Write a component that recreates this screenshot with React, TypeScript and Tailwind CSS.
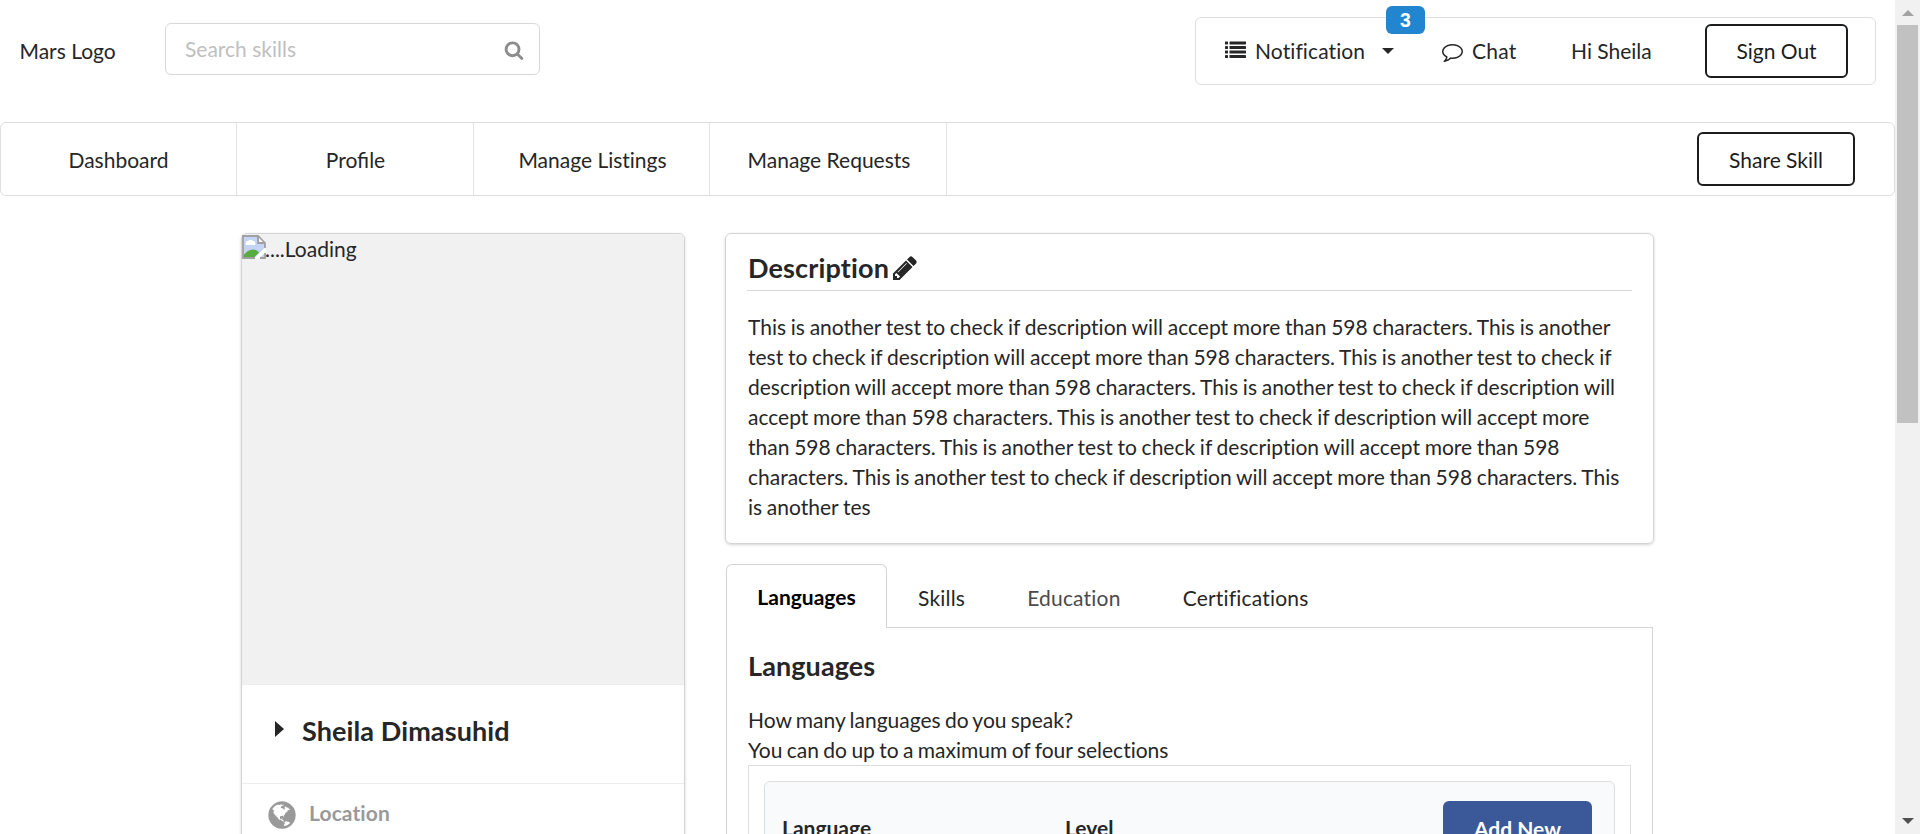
import type { ReactNode } from "react";

const GLOBE =
  "M896 128q209 0 385.5 103t279.5 279.5 103 385.5-103 385.5-279.5 279.5-385.5 103-385.5-103-279.5-279.5-103-385.5 103-385.5 279.5-279.5 385.5-103zm274 521q-2 1-9.5 9.5t-13.5 9.5q2 0 4.5-5t5-11 3.5-7q6-7 22-15 14-6 52-12 34-8 51 11-2-2 9.5-13t14.5-12q3-2 15-4.5t15-7.5l2-22q-12 1-17.5-7t-6.5-21q0 2-6 8 0-7-4.5-8t-11.5 1-9 1q-10-3-15-7.5t-8-16.5-4-15q-2-5-9.5-11t-9.5-10q-1-2-2.5-5.5t-3-6.5-4-5.5-5.5-2.5-7 5-7.5 10-4.5 5q-3-2-6-1.5t-4.5 1-4.5 3-5 3.5q-3 2-8.5 3t-8.5 2q15-5-1-11-10-4-16-3 9-4 7.5-12t-8.5-14h5q-1-4-8.5-8.5t-17.5-8.5-13-6q-8-5-34-9.5t-33-.5q-5 6-4.5 10.5t4 14 3.5 12.5q1 6-5.5 13t-6.5 12q0 7 14 15.5t10 21.5q-3 8-16 16t-16 12q-5 8-1.5 18.5t10.5 16.5q2 2 1.5 4t-3.5 4.5-5.5 4-6.5 3.5l-3 2q-11 5-20.5-6t-13.5-26q-7-25-16-30-23-8-29 1-5-13-41-26-25-9-58-4 6-1 0-15-7-15-19-12 3-6 4-17.5t1-13.5q3-13 12-23 1-1 7-8.5t9.5-13.5.5-6q35 4 50-11 5-5 11.5-17t10.5-17q9-6 14-5.5t14.5 5.5 14.5 5q14 1 15.5-11t-7.5-20q12 1 3-17-4-7-8-9-12-4-27 5-8 4 2 8-1-1-9.5 10.5t-16.5 17.5-16-5q-1-1-5.5-13.5t-9.5-13.5q-8 0-16 15 3-8-11-15t-24-8q19-12-8-27-7-4-20.5-5t-19.5 4q-5 7-5.5 11.5t5 8 10.5 5.5 11.5 4 8.5 3q14 10 8 14-2 1-8.5 3.5t-11.5 4.5-6 4q-3 4 0 14t-2 14q-5-5-9-17.5t-7-16.5q7 9-25 6l-10-1q-4 0-16 2t-20.5 1-13.5-8q-4-8 0-20 1-4 4-2-4-3-11-9.5t-10-8.5q-46 15-94 41 6 1 12-1 5-2 13-6.5t10-5.5q34-14 42-7l5-5q14 16 20 25-7-4-30-1-20 6-22 12 7 12 5 18-4-3-11.5-10t-14.5-11-15-5q-16 0-22 1-146 80-235 222 7 7 12 8 4 1 5 9t2.5 11 11.5-3q9 8 3 19 1-1 44 27 19 17 21 21 3 11-10 18-1-2-9-9t-9-4q-3 5 .5 18.5t10.5 12.5q-7 0-9.5 16t-2.5 35.5-1 23.5l2 1q-3 12 5.5 34.5t21.5 19.5q-13 3 20 43 6 8 8 9 3 2 12 7.5t15 10 10 10.5q4 5 10 22.5t14 23.5q-2 6 9.5 20t10.5 23q-1 0-2.5 1t-2.5 1q3 7 15.5 14t15.5 13q1 3 2 10t3 11 8 2q2-20-24-62-15-25-17-29-3-5-5.5-15.5t-4.5-14.5q2 0 6 1.5t8.5 3.5 7.5 4 2 3q-3 7 2 17.5t12 18.5 17 19 12 13q6 6 14 19.5t0 13.5q9 0 20 10t17 20q5 8 8 26t5 24q2 7 8.5 13.5t12.5 9.5l16 8 13 7q5 2 18.5 10.5t21.5 11.5q10 4 16 4t14.5-2.5 13.5-3.5q15-2 29 15t21 21q36 19 55 11-2 1 .5 7.5t8 15.5 9 14.5 5.5 8.5q5 6 18 15t18 15q6-4 7-9-3 8 7 20t18 10q14-3 14-32-31 15-49-18 0-1-2.5-5.5t-4-8.5-2.5-8.5 0-7.5 5-3q9 0 10-3.5t-2-12.5-4-13q-1-8-11-20t-12-15q-5 9-16 8t-16-9q0 1-1.5 5.5t-1.5 6.5q-13 0-15-1 1-3 2.5-17.5t3.5-22.5q1-4 5.5-12t7.5-14.5 4-12.5-4.5-9.5-17.5-2.5q-19 1-26 20-1 3-3 10.5t-5 11.5-9 7q-7 3-24 2t-24-5q-13-8-22.5-29t-9.5-37q0-10 2.5-26.5t3-25-5.5-24.5q3-2 9-9.5t10-10.5q2-1 4.5-1.5t4.5 0 4-1.5 3-6q-1-1-4-3-3-3-4-3 7 3 28.5-1.5t27.5 1.5q15 11 22-2 0-1-2.5-9.5t-.5-13.5q5 27 29 9 3 3 15.5 5t17.5 5q3 2 7 5.5t5.5 4.5 5-.5 8.5-6.5q10 14 12 24 11 40 19 44 7 3 11 2t4.5-9.5 0-14-1.5-12.5l-1-8v-18l-1-8q-15-3-18.5-12t1.5-18.5 15-18.5q1-1 8-3.5t15.5-6.5 12.5-8q21-19 15-35 7 0 11-9-1 0-5-3t-7.5-5-4.5-2q9-5 2-16 5-3 7.5-11t7.5-10q9 12 21 2 8-8 1-16 5-7 20.5-10.5t18.5-9.5q7 2 8-2t1-12 3-12q4-5 15-9t13-5l17-11q3-4 0-4 18 2 31-11 10-11-6-20 3-6-3-9.5t-15-5.5q3-1 11.5-.5t10.5-1.5q15-10-7-16-17-5-43 12zm-163 877q206-36 351-189-3-3-12.5-4.5t-12.5-3.5q-18-7-24-8 1-7-2.5-13t-8-9-12.5-8-11-7q-2-2-7-6t-7-5.5-7.5-4.5-8.5-2-10 1l-3 1q-3 1-5.5 2.5t-5.5 3-4 3 0 2.5q-21-17-36-22-5-1-11-5.5t-10.5-7-10-1.5-11.5 7q-5 5-6 15t-2 13q-7-5 0-17.5t2-18.5q-3-6-10.5-4.5t-12 4.5-11.5 8.5-9 6.5-8.5 5.5-8.5 7.5q-3 4-6 12t-5 11q-2-4-11.5-6.5t-9.5-5.5q2 10 4 35t5 38q7 31-12 48-27 25-29 40-4 22 12 26 0 7-8 20.5t-7 21.5q0 6 2 16z";
const SEARCH =
  "M1216 832q0-185-131.5-316.5t-316.5-131.5-316.5 131.5-131.5 316.5 131.5 316.5 316.5 131.5 316.5-131.5 131.5-316.5zm512 832q0 52-38 90t-90 38q-54 0-90-38l-343-342q-179 124-399 124-143 0-273.5-55.5t-225-150-150-225-55.5-273.5 55.5-273.5 150-225 225-150 273.5-55.5 273.5 55.5 225 150 150 225 55.5 273.5q0 220-124 399l343 343q37 37 37 90z";
const COMMENT =
  "M896 384q-204 0-381.5 69.5t-282 187.5-104.5 255q0 112 71.5 213.5t201.5 175.5l87 50-27 96q-24 91-70 172 152-63 275-171l43-38 57 6q69 8 130 8 204 0 381.5-69.5t282-187.5 104.5-255-104.5-255-282-187.5-381.5-69.5zm896 512q0 174-120 321.5t-326 233-450 85.5q-70 0-145-8-198 175-460 242-49 14-114 22h-5q-15 0-27-10.5t-16-27.5v-1q-3-4-.5-12t2-10 4.5-9.5l6-9 7-8.5 8-9q7-8 31-34.5t34.5-38 31-39.5 32.5-51 27-59 26-76q-157-89-247.5-220t-90.5-281q0-174 120-321.5t326-233 450-85.5 450 85.5 326 233 120 321.5z";
const PENCIL =
  "M491 1536l91-91-235-235-91 91v107h128v128h107zm523-928q0-22-22-22-10 0-17 7l-542 542q-7 7-7 17 0 22 22 22 10 0 17-7l542-542q7-7 7-17zm-54-192l416 416-832 832h-416v-416zm683 96q0 53-37 90l-166 166-416-416 166-165q36-38 90-38 53 0 91 38l235 234q37 39 37 91z";

function Icon({ d, className }: { d: string; className: string }) {
  return (
    <svg viewBox="0 0 1792 1792" fill="currentColor" className={`shrink-0 ${className}`}>
      <path d={d} />
    </svg>
  );
}

function ListIcon() {
  return (
    <svg viewBox="0 0 21 18" fill="currentColor" className="mb-0.5 h-[18px] w-[21px] shrink-0">
      {[0, 4.5, 9, 13.5].map((y) => (
        <g key={y}>
          <rect x="0" y={y + 0.5} width="3" height="3" rx="0.4" />
          <rect x="4.5" y={y + 0.5} width="16.5" height="3" rx="0.4" />
        </g>
      ))}
    </svg>
  );
}

function BrokenImage() {
  return (
    <svg viewBox="0 0 24 24" className="mt-px h-6 w-6 shrink-0">
      <path d="M1 1h15l7 7v15H1z" fill="#c3d4f6" />
      <path d="M4 10a2.500 2.500 0 0 1 2-4 3 3 0 0 1 5 0 2.500 2.500 0 0 1 2 4z" fill="#fff" />
      <path d="M1 22.500v-2q5-6 10-6 4 0 6 3l-5 5z" fill="#58ab3f" />
      <path d="M12 23.500L23.500 12v5L17 23.500z" fill="#fff" />
      <path
        d="M13 23H1V1h15l7 7v5M18 23h5v-5M16 1v7h7"
        fill="none"
        stroke="#a0a0a0"
        strokeWidth="1.800"
      />
      <path d="M17 3v4h4z" fill="#fff" />
    </svg>
  );
}

function OutlineButton({ children, className }: { children: ReactNode; className: string }) {
  return (
    <button
      className={`flex h-[54px] shrink-0 items-center justify-center rounded-md border-2 border-[#1b1c1d] bg-white text-[#1b1c1d] ${className}`}
    >
      {children}
    </button>
  );
}

function Header() {
  return (
    <header className="flex h-[122px] items-start">
      <div className="w-[165px] pt-9 pl-[19.500px]">Mars Logo</div>
      <div className="mt-[23px] flex h-[52px] w-[375px] items-center justify-between rounded-md border border-[#d8d8d9] pr-[15px] pl-[19px]">
        <span className="text-[#bfbfbf]">Search skills</span>
        <Icon d={SEARCH} className="mt-px h-5 w-5 text-[#8c8c8c]" />
      </div>
      <div className="relative mt-[17px] mr-[19px] ml-auto flex h-[68px] w-[681px] items-center rounded-md border border-[#dededf] pl-[29px]">
        <ListIcon />
        <span className="ml-[9px] w-[110px] tracking-[0.1px]">
          Noti<span className="[font-variant-ligatures:normal]">fi</span>cation
        </span>
        <svg viewBox="0 0 12 6" fill="currentColor" className="ml-[17px] h-1.5 w-3 shrink-0">
          <path d="M0 0h12L6 6z" />
        </svg>
        <span className="absolute -top-3 left-[190px] flex h-7 w-[39px] items-center justify-center rounded-md bg-[#2185d0] font-['Liberation_Sans'] text-[19.500px] font-bold text-white">
          3
        </span>
        <Icon d={COMMENT} className="ml-12 h-[21px] w-[21px]" />
        <span className="ml-[9px] w-[44px] tracking-[0.2px]">Chat</span>
        <span className="ml-[55px] w-20 whitespace-nowrap">Hi Sheila</span>
        <OutlineButton className="ml-auto mr-[27px] w-[143px]">Sign Out</OutlineButton>
      </div>
    </header>
  );
}

const NAV_ITEMS = [
  { label: "Dashboard", className: "w-[236px]" },
  { label: "Profile", className: "w-[237px] pl-px [font-variant-ligatures:normal]" },
  { label: "Manage Listings", className: "w-[236px] pl-0.5" },
  { label: "Manage Requests", className: "w-[237px] pl-0.5" },
];

function Nav() {
  return (
    <nav className="flex h-[74px] items-stretch rounded-md border border-[#dededf]">
      {NAV_ITEMS.map(({ label, className }) => (
        <a
          key={label}
          className={`flex items-center justify-center border-r border-[#e3e3e4] pt-px ${className}`}
        >
          {label}
        </a>
      ))}
      <div className="ml-auto flex items-center pr-[39px]">
        <OutlineButton className="w-[158px] pt-px">Share Skill</OutlineButton>
      </div>
    </nav>
  );
}

function ProfileCard() {
  return (
    <aside className="h-[700px] w-[444px] shrink-0 rounded-md border border-[#d4d4d5] shadow-[0_1px_3px_#d4d4d5]">
      <div className="flex h-[450px] items-start rounded-t-md bg-[#f1f1f1]">
        <BrokenImage />
        <span className="-ml-px">....Loading</span>
      </div>
      <div className="flex h-[100px] items-center border-y border-[#ededee] pb-[7px] pl-[33px]">
        <svg viewBox="0 0 9 16" fill="currentColor" className="mb-1 h-4 w-[9px]">
          <path d="M0 0l9 8-9 8z" />
        </svg>
        <span className="ml-[18px] text-[27px] font-bold tracking-[0.1px]">Sheila Dimasuhid</span>
      </div>
      <div className="flex items-center pt-3.5 pl-6 text-[#999]">
        <Icon d={GLOBE} className="h-8 w-8" />
        <span className="mb-[3px] ml-[11px] font-bold tracking-[0.1px]">Location</span>
      </div>
    </aside>
  );
}

const SENTENCE = "This is another test to check if description will accept more than 598 characters. ";
const DESCRIPTION = `${SENTENCE.repeat(7)}This is another tes`;

function DescriptionCard() {
  return (
    <section className="h-[311px] rounded-md border border-[#d4d4d5] px-[21px] shadow-[0_1px_3px_#d4d4d5]">
      <h2 className="flex h-[57px] items-center border-b border-[#d8d8d9] pt-3 pl-px text-[27px] font-bold tracking-[0.150px]">
        Description
        <Icon d={PENCIL} className="ml-0.5 h-7 w-7" />
      </h2>
      <p className="w-[880px] pt-[21px] pl-px [word-spacing:-0.65px]">{DESCRIPTION}</p>
    </section>
  );
}

function Tabs() {
  return (
    <div className="ml-px mt-5 w-[927px]">
      <div className="flex h-[63px] items-stretch">
        <a className="relative z-10 -mb-px flex w-[161px] items-center justify-center rounded-t-md border border-b-0 border-[#d4d4d5] bg-white pt-px font-bold text-black">
          Languages
        </a>
        <div className="flex flex-1 items-center gap-[62px] pt-1 pl-[31px] tracking-[0.2px]">
          <a>Skills</a>
          <a className="text-[#4a4a4b]">Education</a>
          <a>
            Certi<span className="[font-variant-ligatures:normal]">fi</span>cations
          </a>
        </div>
      </div>
      <div className="h-[300px] border border-[#d4d4d5] px-[21px] pt-5">
        <h2 className="text-[27px] leading-[36px] font-bold tracking-[0.1px]">Languages</h2>
        <p className="mt-[21px] [word-spacing:-1.1px]">How many languages do you speak?</p>
        <p className="[word-spacing:-1px]">You can do up to a maximum of four selections</p>
        <div className="h-40 border border-[#dededf] p-[15px]">
          <div className="flex h-[120px] items-start rounded-t-md border border-[#dededf] bg-[#f9fafb] pr-[22px] pl-[17px] font-bold">
            <span className="w-[283px] pt-[31px]">Language</span>
            <span className="pt-[31px]">Level</span>
            <button className="mt-[19px] ml-auto flex h-[56px] w-[149px] items-center justify-center rounded-md bg-[#3b5998] text-white">
              Add New
            </button>
          </div>
        </div>
      </div>
    </div>
  );
}

function Scrollbar() {
  return (
    <div className="flex w-[25px] shrink-0 flex-col items-center bg-[#f1f1f1]">
      <svg viewBox="0 0 12 6" fill="#a3a3a3" className="mt-2.5 mb-[9px] h-1.5 w-3 shrink-0">
        <path d="M6 0l6 6H0z" />
      </svg>
      <div className="h-[398px] w-[21px] bg-[#c1c1c1]" />
      <svg viewBox="0 0 12 6" fill="#505050" className="mt-auto mb-2.5 h-1.5 w-3 shrink-0">
        <path d="M0 0h12L6 6z" />
      </svg>
    </div>
  );
}

export default function App() {
  return (
    <div className="flex h-[834px] w-[1920px] overflow-hidden bg-white font-['Lato',sans-serif] text-[21px] leading-[30px] text-[#262627] [font-variant-ligatures:none]">
      <div className="h-full w-[1895px] overflow-hidden">
        <Header />
        <Nav />
        <main className="flex gap-10 pt-[37px] pl-[241px]">
          <ProfileCard />
          <div className="w-[929px]">
            <DescriptionCard />
            <Tabs />
          </div>
        </main>
      </div>
      <Scrollbar />
    </div>
  );
}
